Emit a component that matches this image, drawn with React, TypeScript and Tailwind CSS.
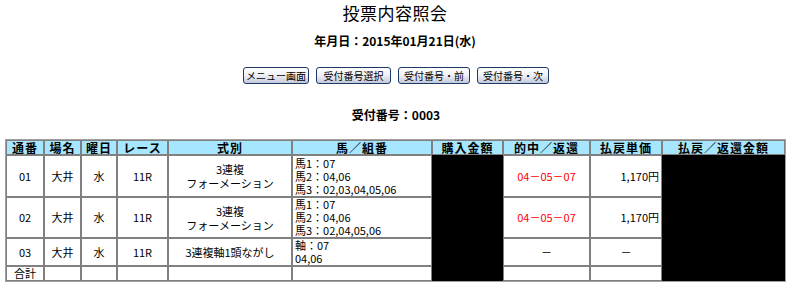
import React from "react";

const th = "border border-[#808080] bg-[#a6e6ff] font-bold text-[12px] leading-[13px] text-center p-0 tracking-[1px]";
const td = "border border-[#808080] text-[11px] leading-[13px] px-[2px] py-0 align-middle";
const blk = "border border-black bg-black";

function Btn({ label, w }: { label: string; w: string }) {
  return (
    <button
      className={`${w} h-[17px] rounded-[3px] border border-[#1d3a66] bg-gradient-to-b from-white via-[#eef0f6] to-[#c3c8da] text-[10px] leading-[15px] text-black p-0`}
    >
      {label}
    </button>
  );
}

export default function App() {
  const font = "font-['MS_UI_Gothic','Noto_Sans_CJK_JP',sans-serif]";
  return (
    <div className={`w-[790px] h-[288px] bg-white text-black overflow-hidden ${font}`}>
      <div className="text-center text-[17px] leading-[25px] pt-0 tracking-[0.5px]">投票内容照会</div>
      <div className="text-center text-[12px] font-bold leading-[14px] mt-[9px]">年月日：2015年01月21日(水)</div>
      <div className="flex justify-center gap-[7px] mt-[19px] pl-[2px]">
        <Btn label="メニュー画面" w="w-[66px]" />
        <Btn label="受付番号選択" w="w-[75px]" />
        <Btn label="受付番号・前" w="w-[72px]" />
        <Btn label="受付番号・次" w="w-[72px]" />
      </div>
      <div className="text-center text-[12px] font-bold leading-[14px] mt-[24px] pl-[2px]">受付番号：0003</div>
      <table className="table-fixed border-separate border-spacing-0 border border-[#a0a0a0] w-[781px] ml-[5px] mt-[17px]">
        <colgroup>
          <col className="w-[38px]" />
          <col className="w-[37px]" />
          <col className="w-[36px]" />
          <col className="w-[51px]" />
          <col className="w-[124px]" />
          <col className="w-[140px]" />
          <col className="w-[71px]" />
          <col className="w-[87px]" />
          <col className="w-[72px]" />
          <col className="w-[123px]" />
        </colgroup>
        <tbody>
          <tr className="h-[15px]">
            <th className={th}>通番</th>
            <th className={th}>場名</th>
            <th className={th}>曜日</th>
            <th className={th}>レース</th>
            <th className={th}>式別</th>
            <th className={th}>馬／組番</th>
            <th className={th}>購入金額</th>
            <th className={th}>的中／返還</th>
            <th className={th}>払戻単価</th>
            <th className={th}>払戻／返還金額</th>
          </tr>
          <tr className="h-[42px]">
            <td className={`${td} text-center`}>01</td>
            <td className={`${td} text-center`}>大井</td>
            <td className={`${td} text-center`}>水</td>
            <td className={`${td} text-center`}>11R</td>
            <td className={`${td} text-center leading-[14px]`}>3連複<br />フォーメーション</td>
            <td className={`${td} text-left`}>馬1：07<br />馬2：04,06<br />馬3：02,03,04,05,06</td>
            <td className={blk} rowSpan={4}></td>
            <td className={`${td} text-center text-[#ff0000]`}>04－05－07</td>
            <td className={`${td} text-right`}>1,170円</td>
            <td className={blk} rowSpan={4}></td>
          </tr>
          <tr className="h-[41px]">
            <td className={`${td} text-center`}>02</td>
            <td className={`${td} text-center`}>大井</td>
            <td className={`${td} text-center`}>水</td>
            <td className={`${td} text-center`}>11R</td>
            <td className={`${td} text-center leading-[14px]`}>3連複<br />フォーメーション</td>
            <td className={`${td} text-left`}>馬1：07<br />馬2：04,06<br />馬3：02,04,05,06</td>
            <td className={`${td} text-center text-[#ff0000]`}>04－05－07</td>
            <td className={`${td} text-right`}>1,170円</td>
          </tr>
          <tr className="h-[28px]">
            <td className={`${td} text-center`}>03</td>
            <td className={`${td} text-center`}>大井</td>
            <td className={`${td} text-center`}>水</td>
            <td className={`${td} text-center`}>11R</td>
            <td className={`${td} text-center`}>3連複軸1頭ながし</td>
            <td className={`${td} text-left`}>軸：07<br />04,06</td>
            <td className={`${td} text-center`}>－</td>
            <td className={`${td} text-center`}>－</td>
          </tr>
          <tr className="h-[15px]">
            <td className={`${td} text-center align-top`}>合計</td>
            <td className={td}></td>
            <td className={td}></td>
            <td className={td}></td>
            <td className={td}></td>
            <td className={td}></td>
            <td className={td}></td>
            <td className={td}></td>
          </tr>
        </tbody>
      </table>
    </div>
  );
}
